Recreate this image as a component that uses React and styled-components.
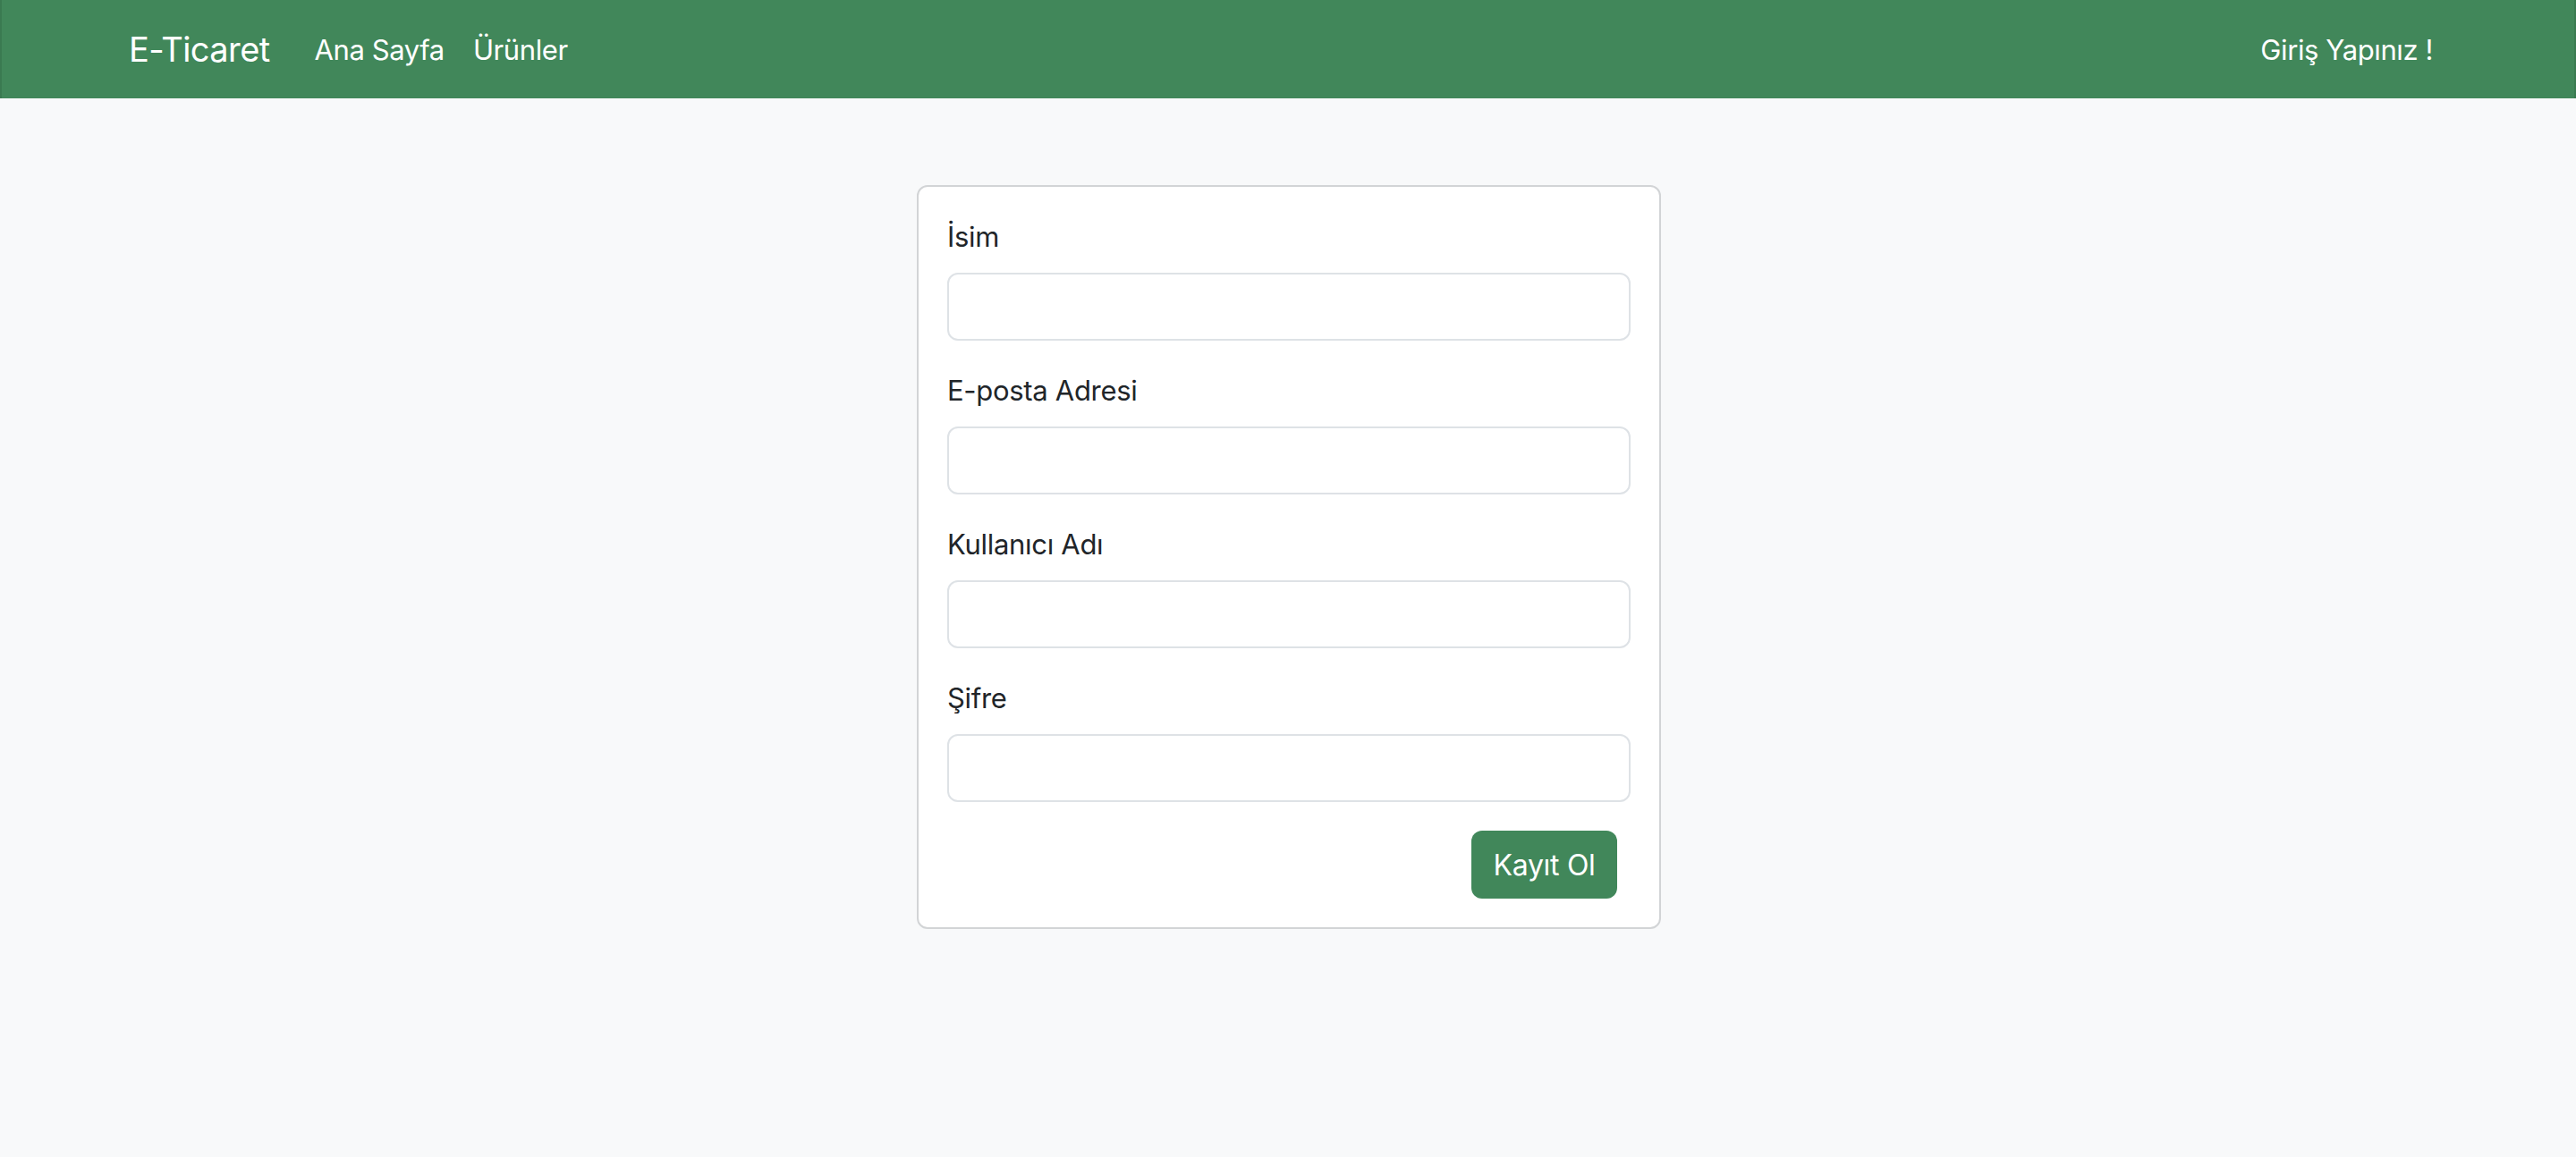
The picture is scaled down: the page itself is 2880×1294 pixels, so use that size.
import React from 'react';
import styled, { createGlobalStyle } from 'styled-components';

const GlobalStyle = createGlobalStyle`
  * { box-sizing: border-box; }
  body {
    margin: 0;
    background: #f8f9fa;
    font-family: Inter, "Noto Sans", "Liberation Sans", sans-serif;
    color: #212529;
  }
`;

const fields = [
  { id: 'name', label: 'İsim', type: 'text' },
  { id: 'email', label: 'E-posta Adresi', type: 'email' },
  { id: 'username', label: 'Kullanıcı Adı', type: 'text' },
  { id: 'password', label: 'Şifre', type: 'password' },
];

const App = () => {
  return (
    <>
      <GlobalStyle />
      <Navbar>
        <NavInner>
          <Brand href="#">E-Ticaret</Brand>
          <NavLinks>
            <NavLink href="#">Ana Sayfa</NavLink>
            <NavLink href="#">Ürünler</NavLink>
          </NavLinks>
          <NavLink href="#">Giriş Yapınız !</NavLink>
        </NavInner>
      </Navbar>
      <Main>
        <Card>
          <form onSubmit={(e) => e.preventDefault()}>
            {fields.map((f) => (
              <Field key={f.id}>
                <Label htmlFor={f.id}>{f.label}</Label>
                <Input id={f.id} type={f.type} />
              </Field>
            ))}
            <Actions>
              <SubmitButton type="submit">Kayıt Ol</SubmitButton>
            </Actions>
          </form>
        </Card>
      </Main>
    </>
  );
};

const Navbar = styled.nav`
  height: 110px;
  background: #41875a;
  border-left: 2px solid #3a7a51;
  border-right: 2px solid #3a7a51;
  display: flex;
  align-items: center;
`;

const NavInner = styled.div`
  width: 100%;
  padding: 0 142px;
  display: flex;
  align-items: center;
`;

const Brand = styled.a`
  color: #fff;
  font-size: 38px;
  text-decoration: none;
  margin-right: 34px;
  letter-spacing: -0.6px;
`;

const NavLinks = styled.div`
  display: flex;
  flex: 1;
`;

const NavLink = styled.a`
  color: #fff;
  font-size: 31px;
  text-decoration: none;
  padding: 0 16px;
  letter-spacing: -0.4px;
`;

const Main = styled.main`
  display: flex;
  justify-content: center;
  padding-top: 97px;
`;

const Card = styled.div`
  width: 832px;
  margin-left: 2px;
  background: #fff;
  border: 2px solid #d2d4d6;
  border-radius: 12px;
  padding: 32px;
`;

const Field = styled.div`
  margin-bottom: 32px;
`;

const Label = styled.label`
  display: block;
  font-size: 31px;
  line-height: 48px;
  margin-bottom: 16px;
  letter-spacing: -0.3px;
`;

const Input = styled.input`
  display: block;
  width: 100%;
  height: 76px;
  border: 2px solid #dee2e6;
  border-radius: 12px;
  background: #fff;
  font-size: 32px;
  padding: 12px 24px;
  outline: none;
`;

const Actions = styled.div`
  display: flex;
  justify-content: flex-end;
  padding-right: 15px;
`;

const SubmitButton = styled.button`
  height: 76px;
  width: 163px;
  padding: 0;
  background: #41875a;
  color: #fff;
  border: none;
  border-radius: 12px;
  font-family: inherit;
  font-size: 32px;
  letter-spacing: -0.3px;
  cursor: pointer;
`;

export default App;
